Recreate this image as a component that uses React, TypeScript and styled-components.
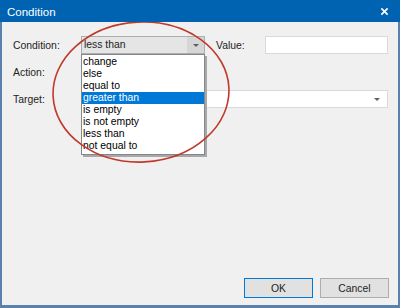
import * as React from "react";
import styled, { createGlobalStyle } from "styled-components";

const GlobalStyle = createGlobalStyle`
	html, body {
		margin: 0;
		padding: 0;
		background: #ffffff;
	}
	body {
		font-family: "Liberation Sans", Arial, sans-serif;
	}
`;

const conditions = [
	"change",
	"else",
	"equal to",
	"greater than",
	"is empty",
	"is not empty",
	"less than",
	"not equal to",
];

const App = () => {
	return (
		<>
			<GlobalStyle />
			<Window>
				<TitleBar>
					<Title>Condition</Title>
					<CloseGlyph viewBox="0 0 10 10">
						<path d="M1.5 1.5 L8.5 8.5 M8.5 1.5 L1.5 8.5" />
					</CloseGlyph>
				</TitleBar>
				<Body>
					<Form>
						<Label>Condition:</Label>
						<ComboWrap>
							<Combo>
								<ComboText>less than</ComboText>
								<ComboButton>
									<Arrow />
								</ComboButton>
							</Combo>
							<DropList>
								{conditions.map((c) => (
									<DropItem key={c} selected={c === "greater than"}>
										{c}
									</DropItem>
								))}
							</DropList>
						</ComboWrap>
						<ValueLabel>Value:</ValueLabel>
						<TextBox />

						<Label>Action:</Label>
						<Empty />

						<Label>Target:</Label>
						<TargetCombo>
							<Arrow />
						</TargetCombo>
					</Form>
					<Buttons>
						<Button primary>OK</Button>
						<Button>Cancel</Button>
					</Buttons>
					<Annotation viewBox="0 0 400 290">
						<ellipse cx="141" cy="70" rx="88" ry="70" transform="rotate(-3 141 70)" />
					</Annotation>
				</Body>
			</Window>
		</>
	);
};

const Window = styled.div`
	width: 400px;
	height: 308px;
	display: flex;
	flex-direction: column;
	box-sizing: border-box;
`;

const TitleBar = styled.div`
	height: 22px;
	background: #0063b1;
	display: flex;
	align-items: center;
	justify-content: space-between;
	padding: 0 11px 0 7px;
	flex-shrink: 0;
`;

const Title = styled.span`
	color: #ffffff;
	font-size: 11.5px;
	margin-top: 1px;
`;

const CloseGlyph = styled.svg`
	width: 9px;
	height: 9px;
	stroke: #ffffff;
	stroke-width: 1.8;
	fill: none;
`;

const Body = styled.div`
	position: relative;
	flex: 1;
	background: #f0f0f0;
	border: 2px solid #5a80ad;
	border-top: none;
	border-bottom-width: 3px;
	display: flex;
	flex-direction: column;
	justify-content: space-between;
	padding: 14px 9px 7px 10px;
`;

const Form = styled.div`
	display: grid;
	grid-template-columns: 69px 124px 11px 49px 123px;
	grid-template-rows: 18px 18px 18px;
	row-gap: 9px;
	align-items: center;
	font-size: 10.4px;
	color: #1e1e1e;
`;

const Label = styled.div`
	grid-column: 1;
	padding-left: 1px;
`;

const ValueLabel = styled.div`
	grid-column: 4;
`;

const ComboWrap = styled.div`
	position: relative;
	grid-column: 2;
	height: 18px;
	z-index: 2;
`;

const Combo = styled.div`
	height: 18px;
	box-sizing: border-box;
	border: 1px solid #adadad;
	background: #e5e5e5;
	display: flex;
	align-items: stretch;
`;

const ComboText = styled.div`
	flex: 1;
	padding-left: 2px;
	line-height: 16px;
`;

const ComboButton = styled.div`
	width: 17px;
	background: #d6d6d6;
	display: flex;
	align-items: center;
	justify-content: center;
`;

const Arrow = styled.div`
	width: 0;
	height: 0;
	border-left: 3px solid transparent;
	border-right: 3px solid transparent;
	border-top: 3px solid #606060;
`;

const DropList = styled.div`
	position: absolute;
	left: 0;
	top: 18px;
	width: 124px;
	box-sizing: border-box;
	background: #ffffff;
	border: 1px solid #828790;
	box-shadow: 2px 2px 0 #a8a8a8;
	padding: 1px 0 2px 0;
`;

const DropItem = styled.div<{ selected?: boolean }>`
	height: 12px;
	line-height: 12px;
	padding-left: 1px;
	color: ${({ selected }) => (selected ? "#ffffff" : "#000000")};
	background: ${({ selected }) => (selected ? "#0078d7" : "transparent")};
`;

const TextBox = styled.div`
	grid-column: 5;
	height: 18px;
	box-sizing: border-box;
	border: 1px solid #d9d9d9;
	background: #ffffff;
`;

const Empty = styled.div`
	grid-column: 2 / span 4;
`;

const TargetCombo = styled.div`
	grid-column: 2 / span 4;
	height: 18px;
	box-sizing: border-box;
	border: 1px solid #d9d9d9;
	background: #ffffff;
	display: flex;
	align-items: center;
	justify-content: flex-end;
	padding-right: 7px;
`;

const Buttons = styled.div`
	display: flex;
	justify-content: flex-end;
	gap: 7px;
`;

const Button = styled.div<{ primary?: boolean }>`
	width: 69px;
	height: 20px;
	box-sizing: border-box;
	border: 1px solid ${({ primary }) => (primary ? "#0078d7" : "#adadad")};
	background: #e1e1e1;
	display: flex;
	align-items: center;
	justify-content: center;
	font-size: 10.4px;
	color: #1e1e1e;
`;

const Annotation = styled.svg`
	position: absolute;
	left: -2px;
	top: 0;
	width: 400px;
	height: 290px;
	pointer-events: none;
	z-index: 3;
	fill: none;
	stroke: #c0392b;
	stroke-width: 1.6;
`;

export default App;
